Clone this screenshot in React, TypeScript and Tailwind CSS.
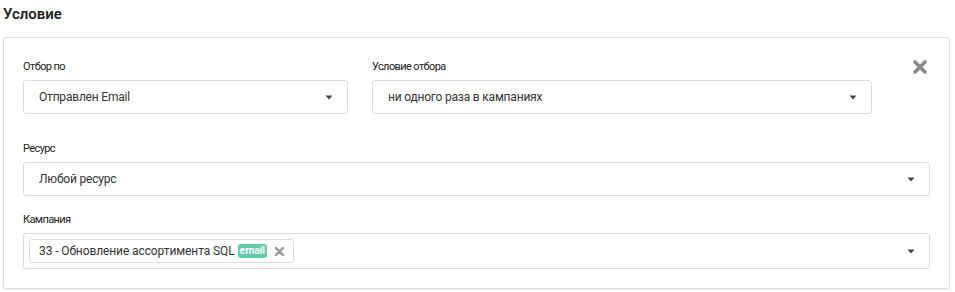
const Caret = () => (
  <svg width="8" height="5" viewBox="0 0 8 5" className="shrink-0">
    <path d="M0.5 0.5 L7.5 0.5 L4 4.5 Z" fill="#444" />
  </svg>
);

const Cross = ({ size, color }: { size: number; color: string }) => (
  <svg width={size} height={size} viewBox="0 0 16 16">
    <path
      d="M3 3 L13 13 M13 3 L3 13"
      stroke={color}
      strokeWidth="3.6"
      strokeLinecap="round"
    />
  </svg>
);

const Label = ({ children }: { children: React.ReactNode }) => (
  <div className="mb-[5px] h-[17px] text-[11px] leading-[17px] tracking-[-0.6px] text-[#222]">{children}</div>
);

const Select = ({ value, className = "" }: { value: string; className?: string }) => (
  <div
    className={`flex h-[34px] items-center justify-between rounded-[3px] border border-[#dcdcdc] bg-white pl-[15px] pr-[14px] text-[12px] tracking-[-0.2px] text-[#333] ${className}`}
  >
    <span>{value}</span>
    <Caret />
  </div>
);

export default function App() {
  return (
    <div
      className="h-[292px] w-[955px] bg-white px-[3px] pt-[2px] text-[#333]"
      style={{ fontFamily: 'Roboto, "Noto Sans", sans-serif' }}
    >
      <div className="h-[35px] text-[15px] font-semibold leading-[24px] text-[#222]">Условие</div>

      <div className="w-[947px] rounded-[3px] border border-[#dedede] px-[19px] pt-[20px] pb-[19px] shadow-[0_1px_2px_rgba(0,0,0,0.08)]">
        <div className="flex">
          <div className="w-[325px]">
            <Label>Отбор по</Label>
            <Select value="Отправлен Email" />
          </div>
          <div className="ml-[24px] w-[500px]">
            <Label>Условие отбора</Label>
            <Select value="ни одного раза в кампаниях" />
          </div>
          <div className="flex flex-1 justify-end pr-[2px] pt-[1px]">
            <Cross size={16} color="#8a8a8a" />
          </div>
        </div>

        <div className="mt-[26px]">
          <Label>Ресурс</Label>
          <Select value="Любой ресурс" />
        </div>

        <div className="mt-[15px]">
          <Label>Кампания</Label>
          <div className="flex h-[36px] items-center justify-between rounded-[3px] border border-[#dcdcdc] bg-white pl-[5px] pr-[14px]">
            <div className="flex h-[24px] items-center rounded-[3px] border border-[#dcdcdc] pl-[9px] pr-[8px] text-[12px] tracking-[-0.1px] text-[#333]">
              <span>33 - Обновление ассортимента SQL</span>
              <span className="ml-[3px] rounded-[3px] bg-[#5ecbab] px-[2px] text-[10.5px] font-semibold leading-[14px] text-white">
                email
              </span>
              <span className="ml-[7px] flex">
                <Cross size={11} color="#999" />
              </span>
            </div>
            <Caret />
          </div>
        </div>
      </div>
    </div>
  );
}
